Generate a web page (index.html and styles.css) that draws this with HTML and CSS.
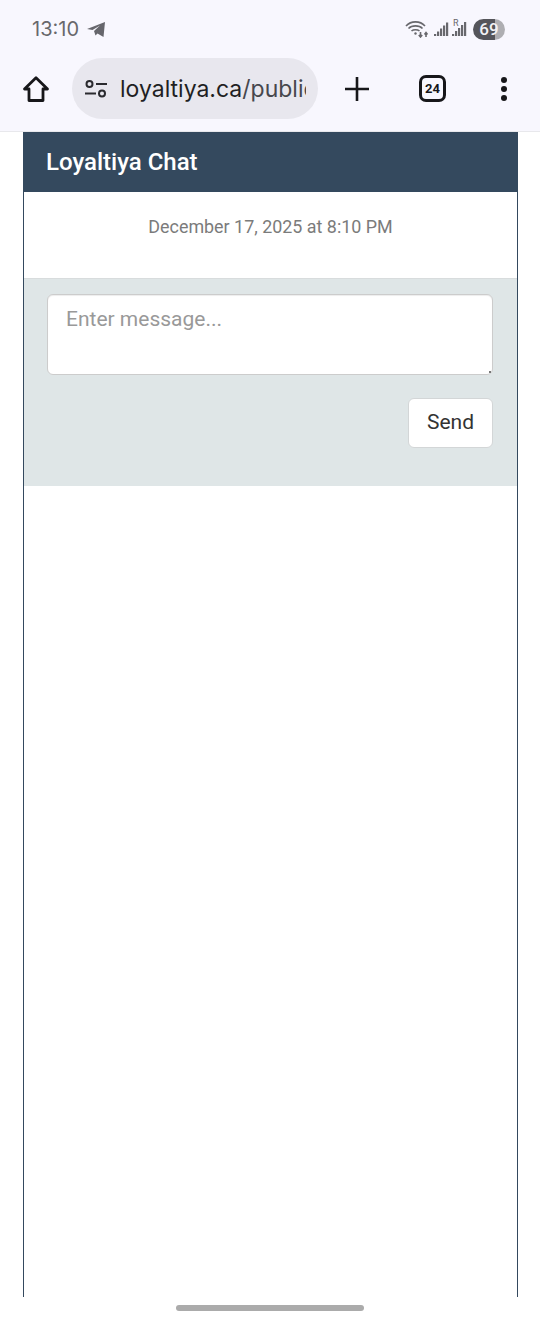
FILE: index.html
```html
<!DOCTYPE html>
<html lang="en">
<head>
    <meta charset="UTF-8">
    <meta name="viewport" content="width=device-width, initial-scale=1.0">
    <title>Loyaltiya Chat</title>
    <link rel="stylesheet" href="styles.css">
</head>
<body>
    <div class="browser-top">
        <div class="status-bar">
            <div class="status-left">
                <span class="clock">13:10</span>
                <svg class="send-icon" width="20" height="17" viewBox="0 0 20 17"><path d="M19 1 L17.500 16 L11.500 12.500 L9.500 14.500 L8 10 L14 4.500 L6.500 9 L1 8 Z" fill="#66666c"/></svg>
            </div>
            <div class="status-right">
                <svg width="26" height="18" viewBox="0 0 26 18" fill="none" stroke="#68686d" stroke-width="1.600">
                    <path d="M1 6 C6 0.500 15 0.500 20 6"/>
                    <path d="M3.500 8.500 C7 5 14 5 17.500 8.500"/>
                    <path d="M6.500 11 C8.500 9.300 12.500 9.300 14.500 11"/>
                    <path d="M15.500 12 V17 M13.800 15 L15.500 17 L17.200 15 M21 17 V12.500 M19.500 14.500 L21 12.500 L22.500 14.500"/>
                    <circle cx="10.500" cy="13.500" r="1.200" fill="#68686d" stroke="none"/>
                </svg>
                <svg width="15" height="16" viewBox="0 0 15 16" fill="#68686d">
                    <rect x="0" y="13" width="2.200" height="2"/>
                    <rect x="3" y="10.500" width="2.200" height="4.500"/>
                    <rect x="6" y="7.500" width="2.200" height="7.500"/>
                    <rect x="9" y="4.500" width="2.200" height="10.500"/>
                    <rect x="12" y="1.500" width="2.200" height="13.500"/>
                </svg>
                <div class="signal-roaming">
                    <span class="roaming-r">R</span>
                    <svg width="15" height="16" viewBox="0 0 15 16" fill="#68686d">
                        <rect x="0" y="13" width="2.200" height="2"/>
                        <rect x="3" y="10" width="2.200" height="5"/>
                        <rect x="6" y="7" width="2.200" height="8"/>
                        <rect x="9" y="4" width="2.200" height="11"/>
                        <rect x="12" y="1" width="2.200" height="14"/>
                    </svg>
                </div>
                <div class="battery"><span>69</span></div>
            </div>
        </div>
        <div class="toolbar">
            <svg class="home-icon" width="30" height="30" viewBox="0 0 30 30" fill="none" stroke="#17171a" stroke-width="2.800" stroke-linejoin="round"><path d="M3.500 15 L15 3.800 L26.500 15 H22 V26.500 H8 V15 Z"/></svg>
            <div class="url-pill">
                <svg class="tune-icon" width="24" height="20" viewBox="0 0 24 20" fill="none" stroke="#2a2a2e" stroke-width="2"><circle cx="5.500" cy="5" r="3"/><path d="M12 5 H23"/><path d="M1 14.500 H12"/><circle cx="18" cy="14.500" r="3"/></svg>
                <span class="url-text"><span class="url-host">loyaltiya.ca</span>/public</span>
            </div>
            <svg class="plus-icon" width="28" height="28" viewBox="0 0 28 28" stroke="#17171a" stroke-width="2.600"><path d="M14 2 V26 M2 14 H26"/></svg>
            <div class="tab-count">24</div>
            <div class="more-dots"><i></i><i></i><i></i></div>
        </div>
    </div>

    <div class="chat-frame">
        <div class="chat-header">Loyaltiya Chat</div>
        <div class="chat-date">December 17, 2025 at 8:10 PM</div>
        <div class="chat-form">
            <div class="input-wrap">
                <textarea class="chat-input" placeholder="Enter message..."></textarea>
            </div>
            <div class="form-actions">
                <button class="send-btn">Send</button>
            </div>
        </div>
    </div>

    <div class="home-bar"></div>
</body>
</html>
```
FILE: styles.css
```css
html, body {
    margin: 0;
    padding: 0;
}
body {
    width: 540px;
    height: 1320px;
    overflow: hidden;
    background-color: #fff;
    font-family: Roboto, "Liberation Sans", sans-serif;
    display: flex;
    flex-direction: column;
}
.browser-top {
    height: 131px;
    background-color: #f8f7fe;
    border-bottom: 1px solid #e8e8ec;
}
.status-bar {
    height: 58px;
    display: flex;
    justify-content: space-between;
    align-items: center;
    padding: 0 35px 0 32px;
}
.status-left, .status-right {
    display: flex;
    align-items: center;
}
.clock {
    font-family: Inter, Roboto, sans-serif;
    font-size: 20px;
    color: #68686c;
}
.send-icon {
    margin-left: 7px;
}
.status-right svg {
    display: block;
}
.status-right {
    gap: 3px;
}
.signal-roaming {
    position: relative;
}
.roaming-r {
    position: absolute;
    left: 1px;
    top: -3px;
    font-size: 9px;
    color: #68686d;
}
.battery {
    width: 32px;
    height: 21px;
    border-radius: 11px;
    background: linear-gradient(90deg, #55555a 0, #55555a 69%, #aeaeb2 69%, #aeaeb2 100%);
    color: #f2f2f4;
    font-size: 17px;
    font-weight: 500;
    text-align: center;
    line-height: 21px;
    margin-left: 3px;
}
.toolbar {
    height: 61px;
    display: flex;
    align-items: center;
    padding: 0 0 0 21px;
}
.home-icon {
    flex: none;
}
.url-pill {
    width: 246px;
    height: 61px;
    margin-left: 21px;
    border-radius: 31px;
    background-color: #e8e7ee;
    display: flex;
    align-items: center;
    padding-left: 12px;
    box-sizing: border-box;
    overflow: hidden;
}
.tune-icon {
    flex: none;
}
.url-text {
    margin-left: 12px;
    width: 186px;
    overflow: hidden;
    white-space: nowrap;
    font-family: Inter, Roboto, sans-serif;
    font-size: 23px;
    color: #47474d;
}
.url-host {
    color: #1f1f23;
}
.plus-icon {
    margin-left: 25px;
    flex: none;
}
.tab-count {
    width: 21px;
    height: 21px;
    margin-left: 48px;
    border: 3px solid #17171a;
    border-radius: 7px;
    font-size: 13px;
    font-weight: 700;
    color: #17171a;
    display: flex;
    align-items: center;
    justify-content: center;
    flex: none;
}
.more-dots {
    margin-left: 55px;
    display: flex;
    flex-direction: column;
    gap: 3px;
}
.more-dots i {
    display: block;
    width: 6px;
    height: 6px;
    border-radius: 50%;
    background-color: #17171a;
}
.chat-frame {
    width: 495px;
    height: 1165px;
    margin-left: 23px;
    box-sizing: border-box;
    border-left: 1px solid #34495e;
    border-right: 1px solid #34495e;
    display: flex;
    flex-direction: column;
}
.chat-header {
    height: 60px;
    margin: 0 -1px;
    background-color: #34495e;
    color: #fff;
    font-size: 24px;
    font-weight: 500;
    line-height: 60px;
    padding-left: 23px;
}
.chat-date {
    height: 86px;
    box-sizing: border-box;
    padding-top: 24px;
    text-align: center;
    font-size: 17.900px;
    line-height: 21px;
    color: #7b7b7b;
}
.chat-form {
    height: 208px;
    box-sizing: border-box;
    background-color: #dfe6e7;
    border-top: 1px solid #d8dcdd;
    padding: 15px 24px 0 23px;
}
.input-wrap {
    position: relative;
}
/* what is left of the resize grip in the screenshot */
.input-wrap::after {
    content: "";
    position: absolute;
    right: 2px;
    bottom: 2px;
    width: 2px;
    height: 2px;
    background-color: #777;
}
.chat-input {
    display: block;
    width: 100%;
    height: 81px;
    box-sizing: border-box;
    padding: 12px 18px;
    border: 1px solid #cccccc;
    border-radius: 6px;
    background-color: #fff;
    box-shadow: inset 0 1px 1px rgba(0,0,0,0.075);
    font-family: Roboto, sans-serif;
    font-size: 21px;
    line-height: 25px;
    color: #333;
    resize: none;
}
.chat-input::placeholder {
    color: #999;
    opacity: 1;
}
.form-actions {
    display: flex;
    justify-content: flex-end;
    margin-top: 23px;
}
.send-btn {
    width: 85px;
    height: 50px;
    padding: 0 0 2px;
    border: 1px solid #d3d6d7;
    border-radius: 6px;
    background-color: #fff;
    font-family: Roboto, sans-serif;
    font-size: 21px;
    color: #333;
}
.home-bar {
    width: 188px;
    height: 6px;
    margin: 8px auto 0;
    border-radius: 3px;
    background-color: #ababab;
}
```
